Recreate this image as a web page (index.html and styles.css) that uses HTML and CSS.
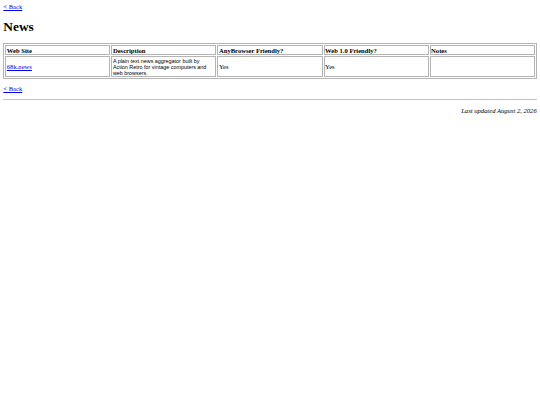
FILE: index.html
```html
<!DOCTYPE html>
<html>
<head>
<meta charset="utf-8">
<title>News</title>
<link rel="stylesheet" href="styles.css">
</head>
<body>
<a href="#" class="back">&lt; Back</a>
<h1 class="title">News</h1>
<table class="sites">
  <tr>
    <th>Web Site</th>
    <th>Description</th>
    <th>AnyBrowser Friendly?</th>
    <th>Web 1.0 Friendly?</th>
    <th>Notes</th>
  </tr>
  <tr>
    <td><a href="#">68k.news</a></td>
    <td class="desc">A plain text news aggregator built by Action Retro for vintage computers and web browsers.</td>
    <td>Yes</td>
    <td>Yes</td>
    <td></td>
  </tr>
</table>
<p class="back-p"><a href="#">&lt; Back</a></p>
<hr class="rule">
<p class="updated">Last updated August 2, 2026</p>
</body>
</html>
```

FILE: styles.css
```css
html { background: #fff; }
body {
  margin: 3.3px;
  font-family: "Liberation Serif", "Times New Roman", serif;
  font-size: 6.6px;
  color: #000;
}
a { color: #0000ee; }
.title {
  font-size: 13.4px;
  font-weight: bold;
  margin: 8.6px 0;
}
.sites {
  width: 100%;
  table-layout: fixed;
  border: 1px solid #b4b4b4;
  border-spacing: 1px;
}
.sites th, .sites td {
  border: 1px solid #b4b4b4;
  padding: 0.4px 0.5px;
  text-align: left;
  vertical-align: middle;
}
.sites th { font-weight: bold; }
.desc {
  font-family: "Liberation Sans", Arial, sans-serif;
  font-size: 5.4px;
}
.back-p { margin: 5.6px 0 7.4px; }
.rule {
  margin: 3.3px 0;
  border: 0;
  border-top: 1px solid #c4c4c4;
  height: 0;
}
.updated {
  text-align: right;
  font-style: italic;
  margin: 6.8px 0;
}
```
